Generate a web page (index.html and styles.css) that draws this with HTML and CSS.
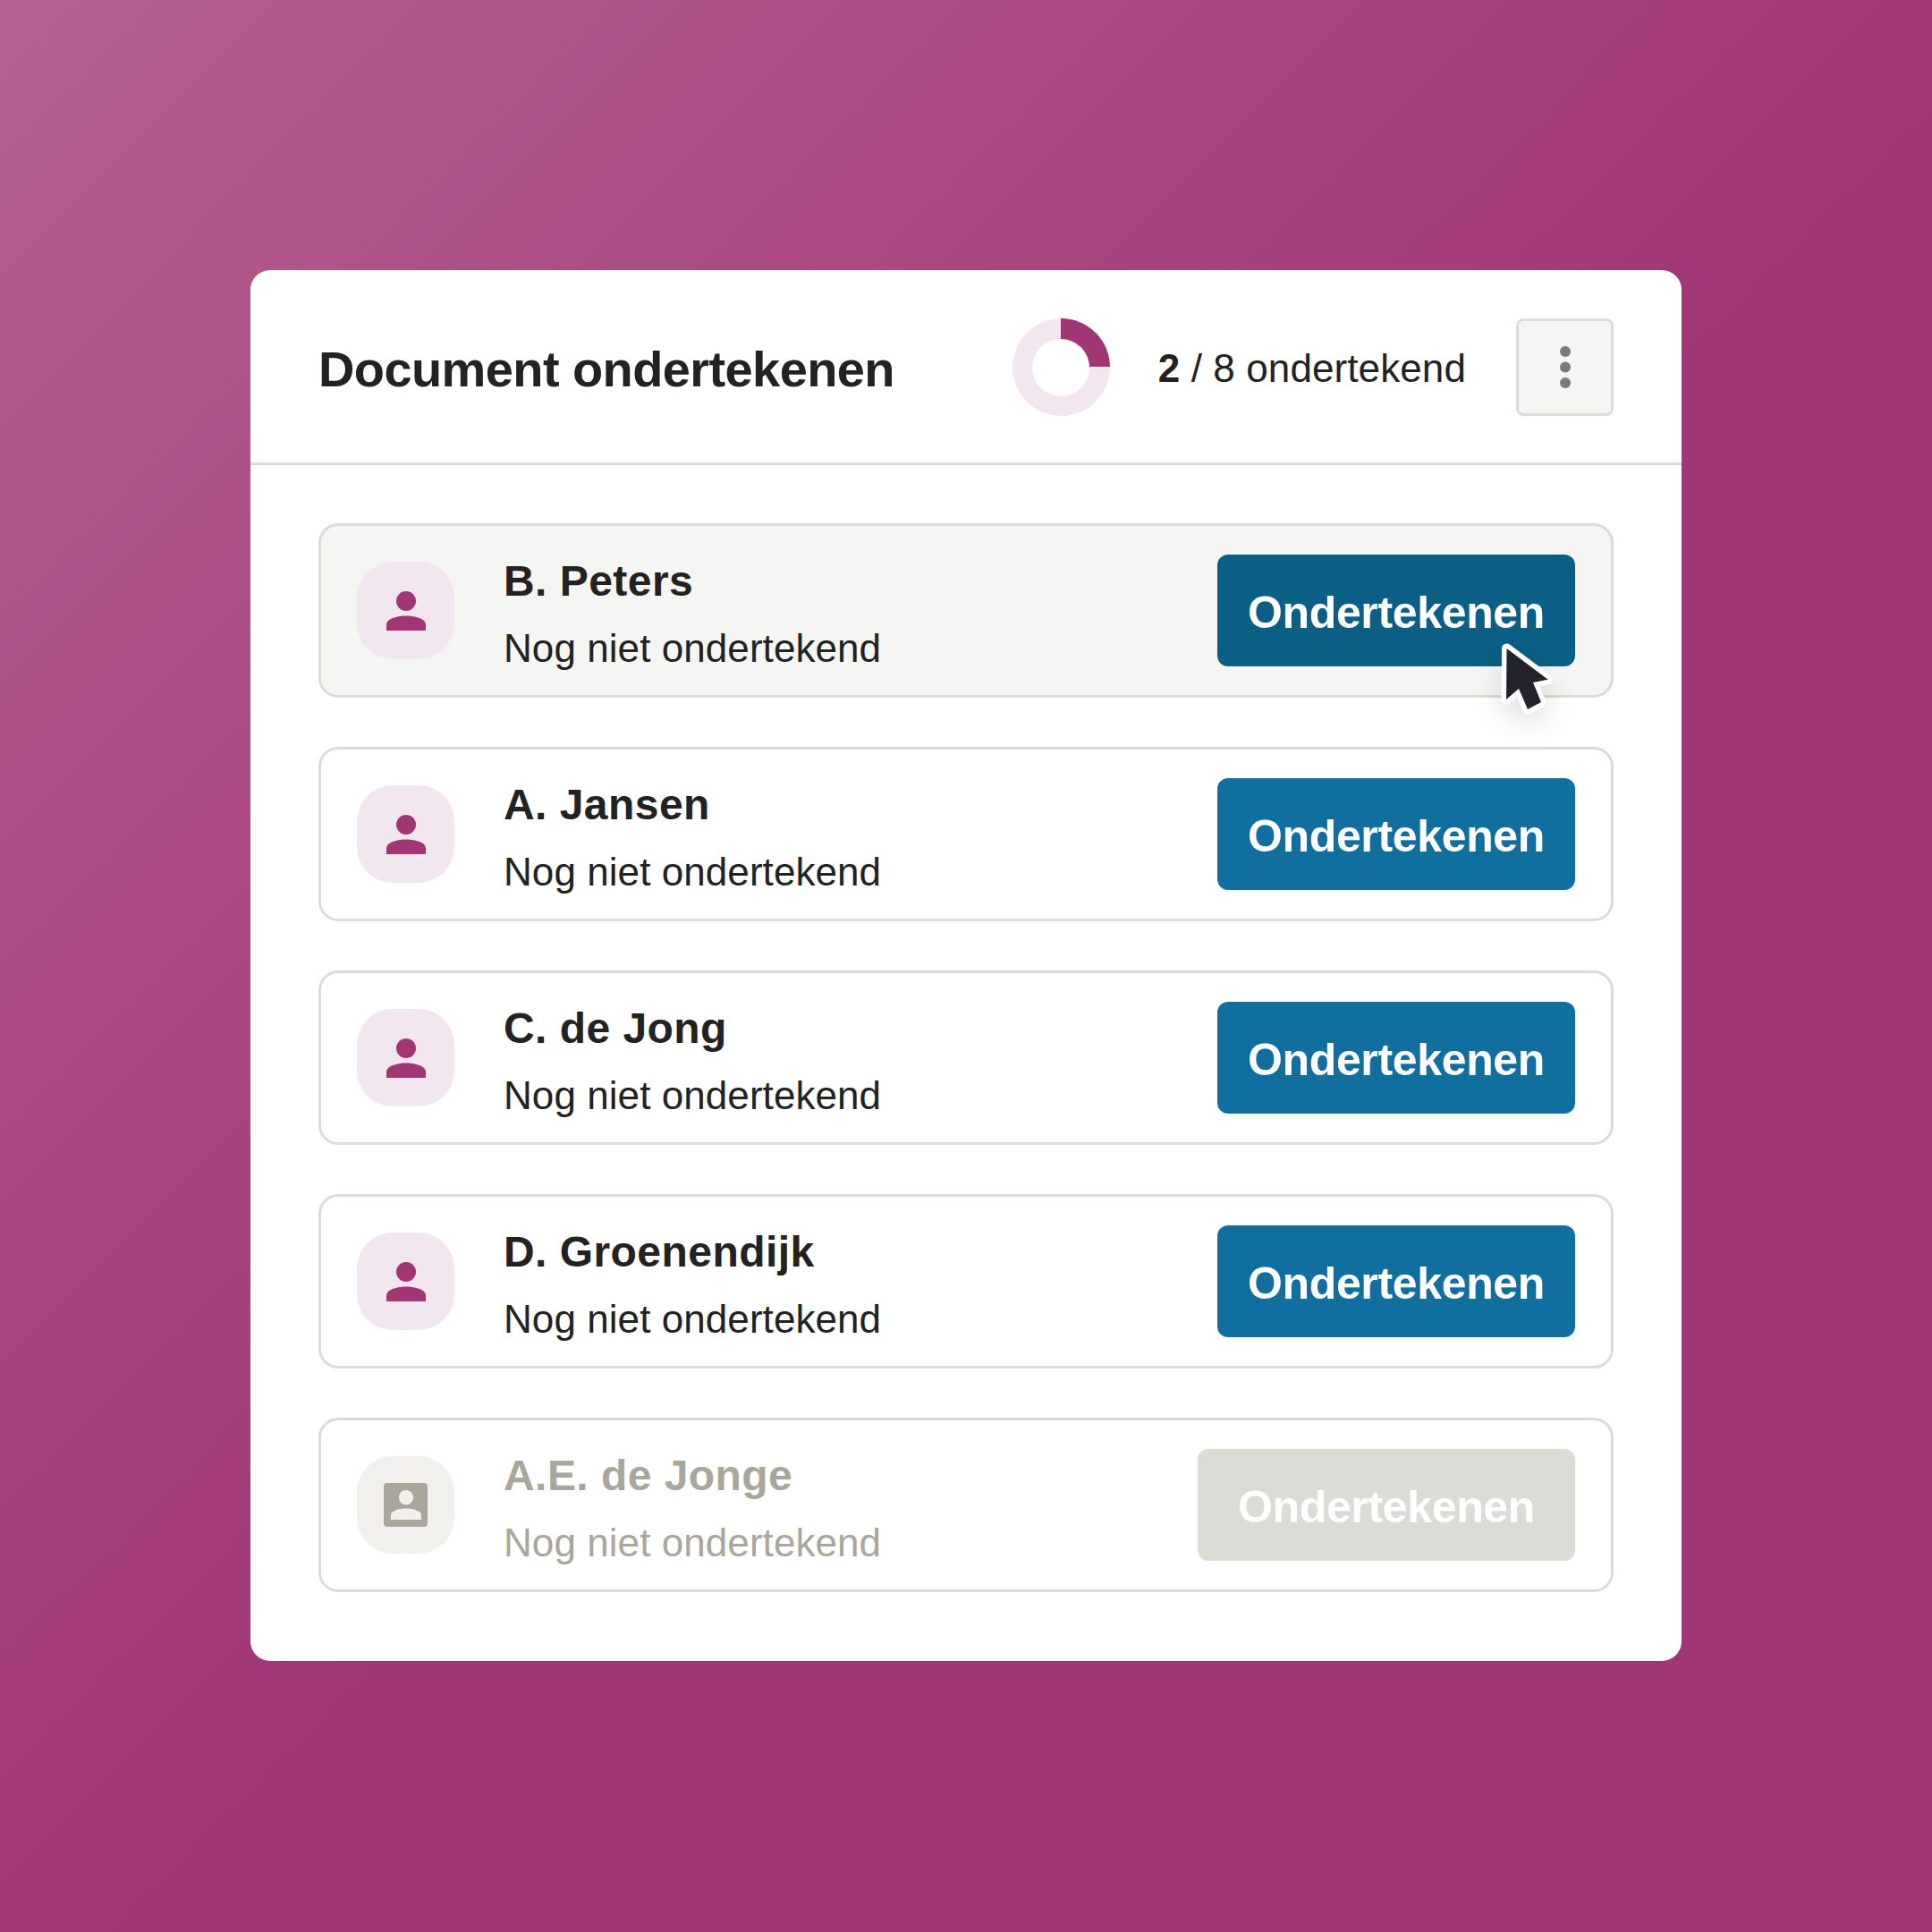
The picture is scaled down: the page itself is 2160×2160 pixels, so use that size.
FILE: index.html
```html
<!DOCTYPE html>
<html lang="nl">
<head>
<meta charset="utf-8">
<title>Document ondertekenen</title>
<link rel="stylesheet" href="styles.css">
</head>
<body>
<main class="card">
  <header class="head">
    <h1 class="title">Document ondertekenen</h1>
    <div class="donut"></div>
    <p class="count"><strong>2</strong> / 8 ondertekend</p>
    <button class="more" aria-label="Meer">
      <svg class="more-icon" viewBox="0 0 12 47"><circle cx="6" cy="6" r="6"/><circle cx="6" cy="23.5" r="6"/><circle cx="6" cy="41" r="6"/></svg>
    </button>
  </header>
  <section class="list">
    <article class="row row-hover">
      <div class="avatar"><svg class="person" viewBox="0 0 66 66"><circle cx="33" cy="22" r="11"/><path d="M11 55v-6.500C11 41 25 38.500 33 38.500S55 41 55 48.500V55z"/></svg></div>
      <div class="info"><h2 class="name">B. Peters</h2><p class="status">Nog niet ondertekend</p></div>
      <button class="sign sign-hover">Ondertekenen</button>
      <svg class="cursor" viewBox="0 0 80 100"><path class="cursor-shape" d="M14.500 14 L60.700 48.700 L44 52 L53 74 L38 82 L28 59 L14 71 Z"/></svg>
    </article>
    <article class="row">
      <div class="avatar"><svg class="person" viewBox="0 0 66 66"><circle cx="33" cy="22" r="11"/><path d="M11 55v-6.500C11 41 25 38.500 33 38.500S55 41 55 48.500V55z"/></svg></div>
      <div class="info"><h2 class="name">A. Jansen</h2><p class="status">Nog niet ondertekend</p></div>
      <button class="sign">Ondertekenen</button>
    </article>
    <article class="row">
      <div class="avatar"><svg class="person" viewBox="0 0 66 66"><circle cx="33" cy="22" r="11"/><path d="M11 55v-6.500C11 41 25 38.500 33 38.500S55 41 55 48.500V55z"/></svg></div>
      <div class="info"><h2 class="name">C. de Jong</h2><p class="status">Nog niet ondertekend</p></div>
      <button class="sign">Ondertekenen</button>
    </article>
    <article class="row">
      <div class="avatar"><svg class="person" viewBox="0 0 66 66"><circle cx="33" cy="22" r="11"/><path d="M11 55v-6.500C11 41 25 38.500 33 38.500S55 41 55 48.500V55z"/></svg></div>
      <div class="info"><h2 class="name">D. Groenendijk</h2><p class="status">Nog niet ondertekend</p></div>
      <button class="sign">Ondertekenen</button>
    </article>
    <article class="row row-off">
      <div class="avatar avatar-off"><svg class="contact" viewBox="0 0 49 49"><path fill-rule="evenodd" d="M4 0h41a4 4 0 0 1 4 4v41a4 4 0 0 1-4 4H4a4 4 0 0 1-4-4V4a4 4 0 0 1 4-4zM25 8a8.200 8.200 0 1 0 0 16.400A8.200 8.200 0 0 0 25 8zM8 41h34v-5c0-5-9-7.500-17-7.500S8 31 8 36z"/></svg></div>
      <div class="info"><h2 class="name">A.E. de Jonge</h2><p class="status">Nog niet ondertekend</p></div>
      <button class="sign sign-off">Ondertekenen</button>
    </article>
  </section>
</main>
</body>
</html>
```
FILE: styles.css
```css
* { box-sizing: border-box; }
html, body { margin: 0; padding: 0; }
body {
  width: 2160px;
  height: 2160px;
  padding-bottom: 1px;
  display: flex;
  align-items: center;
  justify-content: center;
  background: linear-gradient(135deg, #b5618f 0%, #a03674 53%, #a03674 100%);
  font-family: "Liberation Sans", Arial, sans-serif;
  color: #222222;
}
.card {
  width: 1600px;
  height: 1555px;
  background: #ffffff;
  border-radius: 22px;
}
.head {
  height: 218px;
  padding: 54px 76px 0 76px;
  border-bottom: 3px solid #dcdcd6;
  display: flex;
  align-items: flex-start;
  gap: 56px;
}
.title {
  margin: 0 auto 0 0;
  height: 109px;
  padding-top: 2px;
  line-height: 109px;
  font-size: 56px;
  font-weight: 700;
  letter-spacing: -0.6px;
}
.donut {
  width: 109px;
  height: 109px;
  border-radius: 50%;
  background: conic-gradient(#a03674 0 25%, #f2e6ef 25% 100%);
  display: flex;
  align-items: center;
  justify-content: center;
}
.donut::after {
  content: "";
  width: 64px;
  height: 64px;
  border-radius: 50%;
  background: #ffffff;
}
.count {
  margin: 0 0 0 -2px;
  height: 109px;
  padding-top: 1px;
  line-height: 109px;
  font-size: 44px;
  letter-spacing: 0.1px;
}
.more {
  width: 109px;
  height: 109px;
  padding: 0;
  background: #f5f5f3;
  border: 3px solid #dcdcd6;
  border-radius: 8px;
  display: flex;
  align-items: center;
  justify-content: center;
}
.more-icon { width: 12px; height: 47px; fill: #7a7a78; }
.list {
  padding: 65px 76px 0 76px;
  display: flex;
  flex-direction: column;
  gap: 55px;
}
.row {
  height: 195px;
  padding: 0 40px;
  background: #ffffff;
  border: 3px solid #dcdcd6;
  border-radius: 22px;
  display: flex;
  align-items: center;
  gap: 55px;
  position: relative;
}
.row-hover { background: #f5f5f3; }
.avatar {
  width: 109px;
  height: 109px;
  border-radius: 40px;
  background: #f2e6ef;
  display: flex;
  align-items: center;
  justify-content: center;
  flex: none;
}
.avatar-off { background: #f2f0ec; }
.person { width: 66px; height: 66px; fill: #a03674; }
.contact { width: 49px; height: 49px; fill: #a9a69c; }
.info { flex: 1; padding-top: 5px; }
.name {
  margin: 0;
  font-size: 48px;
  line-height: 60px;
  font-weight: 700;
  letter-spacing: 0.45px;
}
.status {
  margin: 20px 0 0;
  font-size: 44px;
  line-height: 50px;
  letter-spacing: 0.07px;
}
.row-off .name, .row-off .status { color: #a9a69c; }
.sign {
  height: 125px;
  padding: 4px 34px 0;
  border: 0;
  border-radius: 12px;
  background: #116f9f;
  color: #ffffff;
  font-family: inherit;
  font-size: 50px;
  font-weight: 700;
  letter-spacing: -0.35px;
  flex: none;
}
.sign-hover { background: #0b5f85; }
.sign-off { background: #dcdbd6; padding: 4px 45px 0; }
.cursor {
  position: absolute;
  left: 1311px;
  top: 123px;
  width: 80px;
  height: 100px;
  overflow: visible;
  filter: drop-shadow(0 12px 16px rgba(0,0,0,0.12));
}
.cursor-shape {
  fill: #22222c;
  stroke: #ffffff;
  stroke-width: 11;
  stroke-linejoin: round;
  paint-order: stroke;
}
```
